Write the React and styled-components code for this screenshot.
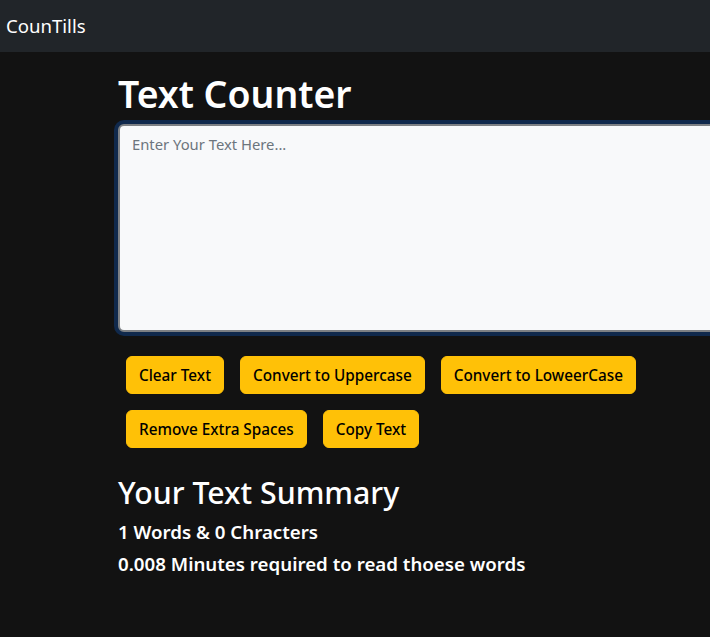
import React, {useState} from "react";
import styled, {createGlobalStyle} from "styled-components";

const GlobalStyle = createGlobalStyle`
  body {
    margin: 0;
    background: #121212;
    color: #fff;
    font-family: "Noto Sans", "Open Sans", sans-serif;
    overflow-x: hidden;
  }
`;

const Navbar = styled.nav`
  height: 52px;
  background: #212529;
  display: flex;
  align-items: center;
  padding: 0 6px;
`;

const Brand = styled.a`
  font-size: 18.6px;
  color: #fff;
  text-decoration: none;
  margin-top: -2px;
`;

const Container = styled.div`
  width: 660px;
  margin: 16px 0 16px 118px;
`;

const Title = styled.h1`
  font-size: 37.4px;
  font-weight: 600;
  line-height: 48px;
  margin: 0 0 8px;
  padding-top: 2px;
  height: 46px;
`;

const TextBox = styled.textarea`
  display: block;
  box-sizing: border-box;
  width: 100%;
  height: 208px;
  padding: 6px 12px;
  margin-bottom: 16px;
  font: inherit;
  font-size: 14.8px;
  line-height: 24px;
  color: #212529;
  background: #f8f9fa;
  border: 2px solid #7d8084;
  border-radius: 6px;
  box-shadow: 0 0 0 4px rgba(13, 110, 253, 0.25);
  resize: none;
  outline: none;

  &::placeholder {
    color: #6c757d;
  }
`;

const ButtonRow = styled.div`
  display: flex;
  flex-wrap: wrap;
  gap: 16px;
  padding: 8px;
`;

const Button = styled.button`
  height: 38px;
  padding: 6px 12px;
  font: inherit;
  font-size: 15.3px;
  font-weight: 500;
  line-height: 24px;
  color: #000;
  background: #ffc107;
  border: 1px solid #ffc107;
  border-radius: 6px;
  cursor: pointer;
`;

const Subtitle = styled.h2`
  font-size: 30.3px;
  font-weight: 500;
  line-height: 38px;
  margin: 0 0 8px;
  padding-top: 2px;
`;

const Stat = styled.h5`
  font-size: 18.7px;
  font-weight: 600;
  line-height: 24px;
  margin: 0 0 8px;
`;

export default function App() {
    const [text, setText] = useState("");

    const words = text.split(" ").length;
    const chars = text.length;

    const removeSpaces = () => setText(text.split(/[ ]+/).join(" "));

    return (
        <>
            <GlobalStyle/>
            <Navbar>
                <Brand href="#">CounTills</Brand>
            </Navbar>
            <Container>
                <Title>Text Counter</Title>
                <TextBox
                    autoFocus
                    value={text}
                    onChange={(e) => setText(e.target.value)}
                    placeholder="Enter Your Text Here..."
                />
                <ButtonRow>
                    <Button onClick={() => setText("")}>Clear Text</Button>
                    <Button onClick={() => setText(text.toUpperCase())}>Convert to Uppercase</Button>
                    <Button onClick={() => setText(text.toLowerCase())}>Convert to LoweerCase</Button>
                    <Button onClick={removeSpaces}>Remove Extra Spaces</Button>
                    <Button onClick={() => navigator.clipboard?.writeText(text)}>Copy Text</Button>
                </ButtonRow>
            </Container>
            <Container>
                <Subtitle>Your Text Summary</Subtitle>
                <Stat>{words} Words &amp; {chars} Chracters</Stat>
                <Stat>{0.008 * words} Minutes required to read thoese words</Stat>
            </Container>
        </>
    );
}
